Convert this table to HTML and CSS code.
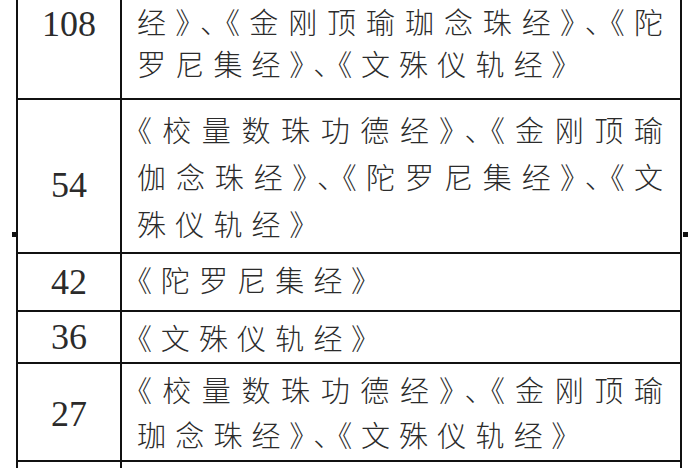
FILE: index.html
```html
<!DOCTYPE html>
<html lang="zh-CN">
<head>
<meta charset="utf-8">
<title>数珠表</title>
<link rel="stylesheet" href="styles.css">
</head>
<body>
<div class="sheet">
  <div class="row r108">
    <div class="num">108</div>
    <div class="txt">
      <div class="ln full">经》、《金刚顶瑜珈念珠经》、《陀</div>
      <div class="ln">罗尼集经》、《文殊仪轨经》</div>
    </div>
  </div>
  <div class="row r54">
    <div class="num">54</div>
    <div class="txt">
      <div class="ln full">《校量数珠功德经》、《金刚顶瑜</div>
      <div class="ln full">伽念珠经》、《陀罗尼集经》、《文</div>
      <div class="ln">殊仪轨经》</div>
    </div>
    <span class="mark mark-l"></span>
    <span class="mark mark-r"></span>
  </div>
  <div class="row r42">
    <div class="num">42</div>
    <div class="txt">
      <div class="ln">《陀罗尼集经》</div>
    </div>
  </div>
  <div class="row r36">
    <div class="num">36</div>
    <div class="txt">
      <div class="ln">《文殊仪轨经》</div>
    </div>
  </div>
  <div class="row r27">
    <div class="num">27</div>
    <div class="txt">
      <div class="ln full">《校量数珠功德经》、《金刚顶瑜</div>
      <div class="ln">珈念珠经》、《文殊仪轨经》</div>
    </div>
  </div>
  <div class="row rlast">
    <div class="num"></div>
    <div class="txt"></div>
  </div>
</div>
</body>
</html>
```

FILE: styles.css
```css
html, body {
  margin: 0;
  padding: 0;
  background: #ffffff;
}

body {
  height: 470px;
  overflow: hidden;
}

.sheet {
  margin-left: 16px;
  width: 662px;
  border-left: 2px solid #111;
  border-right: 2px solid #111;
  color: #2b2b2b;
}

.row {
  display: grid;
  grid-template-columns: 104px 1fr;
  border-bottom: 2px solid #111;
  position: relative;
}

.num {
  border-right: 2px solid #111;
  font-family: "Liberation Serif", "Times New Roman", serif;
  font-size: 36px;
  display: flex;
  align-items: center;
  justify-content: center;
}

.txt {
  display: flex;
  flex-direction: column;
  justify-content: center;
  padding: 0 17px 0 15px;
  font-family: "Noto Sans CJK SC", "Noto Sans", sans-serif;
  font-size: 29px;
  font-weight: 300;
  font-feature-settings: "palt";
}

.ln {
  line-height: 46px;
  white-space: nowrap;
  letter-spacing: 9.2px;
}

.ln.full {
  letter-spacing: 0;
  text-align: justify;
  text-align-last: justify;
}

.r108 { height: 98px; }
.r108 .txt { justify-content: flex-start; }
.r108 .ln { line-height: 42px; }
.r108 .num { align-items: flex-start; padding-top: 4px; line-height: 40px; }

.r54 { height: 152px; }
.r54 .ln { line-height: 47px; }
.r54 .num { padding-top: 18px; }

.r42 { height: 56px; }
.r42 .txt { padding-bottom: 6px; }

.r36 { height: 50px; }

.r27 { height: 96px; }
.r27 .ln { line-height: 45px; }
.r27 .num { padding-top: 4px; }

.rlast { height: 6px; border-bottom: none; }

.mark {
  position: absolute;
  top: 132px;
  width: 5px;
  height: 5px;
  background: #111;
}

.mark-l { left: -6px; }
.mark-r { right: -8px; }
```
